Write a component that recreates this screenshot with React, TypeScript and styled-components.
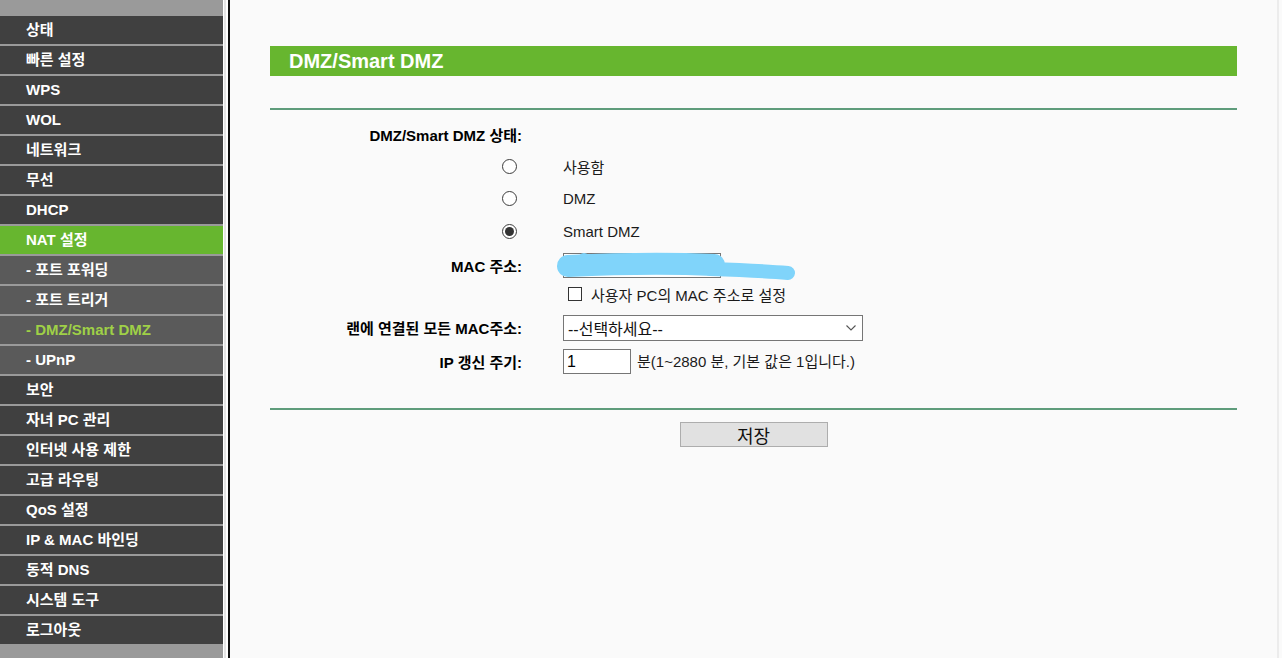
import React from 'react'
import styled, { createGlobalStyle } from 'styled-components'

const GlobalStyle = createGlobalStyle`
    html, body {
        margin: 0;
        padding: 0;
        background: #fafafa;
        font-family: "Liberation Sans", Arial, "Noto Sans CJK KR", sans-serif;
    }
`

type MenuItem = { label: string; sub?: boolean; active?: boolean; current?: boolean }

const menu: MenuItem[] = [
    { label: '상태' },
    { label: '빠른 설정' },
    { label: 'WPS' },
    { label: 'WOL' },
    { label: '네트워크' },
    { label: '무선' },
    { label: 'DHCP' },
    { label: 'NAT 설정', active: true },
    { label: '- 포트 포워딩', sub: true },
    { label: '- 포트 트리거', sub: true },
    { label: '- DMZ/Smart DMZ', sub: true, current: true },
    { label: '- UPnP', sub: true },
    { label: '보안' },
    { label: '자녀 PC 관리' },
    { label: '인터넷 사용 제한' },
    { label: '고급 라우팅' },
    { label: 'QoS 설정' },
    { label: 'IP & MAC 바인딩' },
    { label: '동적 DNS' },
    { label: '시스템 도구' },
    { label: '로그아웃' },
]

export default function App() {
    return (
        <>
            <GlobalStyle />
            <Page>
                <Sidebar>
                    {menu.map((m) => (
                        <MenuRow key={m.label} $sub={m.sub} $active={m.active} $current={m.current}>
                            {m.label}
                        </MenuRow>
                    ))}
                </Sidebar>
                <Divider />
                <Main>
                    <Panel>
                        <TitleBar>DMZ/Smart DMZ</TitleBar>
                        <Rule />
                        <Form>
                            <Row $h={32}>
                                <Label>DMZ/Smart DMZ 상태:</Label>
                                <Value />
                            </Row>
                            <Row $h={32}>
                                <Cell><Radio /></Cell>
                                <Value>사용함</Value>
                            </Row>
                            <Row $h={32}>
                                <Cell><Radio /></Cell>
                                <Value>DMZ</Value>
                            </Row>
                            <Row $h={34}>
                                <Cell><Radio $checked /></Cell>
                                <Value>Smart DMZ</Value>
                            </Row>
                            <Row $h={34}>
                                <Label>MAC 주소:</Label>
                                <Value>
                                    <MacWrap>
                                        <TextBox $w={158} defaultValue="" />
                                        {/* 가림 처리된 MAC 주소 */}
                                        <Scribble width="255" height="40" viewBox="0 0 255 40">
                                            <path d="M18 20 C 60 18, 120 17, 164 19" stroke="#80d4fa" strokeWidth="22" strokeLinecap="round" fill="none" />
                                            <circle cx="34" cy="13" r="6" fill="#80d4fa" />
                                            <path d="M160 23 C 190 24, 215 25, 238 27" stroke="#80d4fa" strokeWidth="14" strokeLinecap="round" fill="none" />
                                        </Scribble>
                                    </MacWrap>
                                </Value>
                            </Row>
                            <Row $h={24}>
                                <Cell />
                                <Value>
                                    <CheckLabel>
                                        <CheckBox />
                                        사용자 PC의 MAC 주소로 설정
                                    </CheckLabel>
                                </Value>
                            </Row>
                            <Row $h={43}>
                                <Label>랜에 연결된 모든 MAC주소:</Label>
                                <Value>
                                    <SelectBox>
                                        <span>--선택하세요--</span>
                                        <svg width="12" height="8" viewBox="0 0 12 8">
                                            <path d="M1.5 1.5 L6 6 L10.5 1.5" stroke="#555" strokeWidth="1.1" fill="none" />
                                        </svg>
                                    </SelectBox>
                                </Value>
                            </Row>
                            <Row $h={22}>
                                <Label>IP 갱신 주기:</Label>
                                <Value>
                                    <TextBox $w={68} defaultValue="1" />
                                    <Hint>분(1~2880 분, 기본 값은 1입니다.)</Hint>
                                </Value>
                            </Row>
                        </Form>
                        <Rule $top={37} />
                        <Actions>
                            <SaveButton>저장</SaveButton>
                        </Actions>
                    </Panel>
                </Main>
            </Page>
        </>
    )
}

const Page = styled.div`
    display: flex;
    height: 658px;
    overflow: hidden;
    background: #fafafa;
`

const Sidebar = styled.nav`
    width: 223px;
    flex-shrink: 0;
    background: #9a9a9a;
    padding-top: 16px;
    display: flex;
    flex-direction: column;
    gap: 2px;
`

const MenuRow = styled.div<{ $sub?: boolean; $active?: boolean; $current?: boolean }>`
    height: 28px;
    line-height: 27px;
    padding-left: 26px;
    font-size: 15px;
    font-weight: bold;
    color: ${(p) => (p.$current ? '#9fd047' : '#ffffff')};
    background: ${(p) => (p.$active ? '#67b62f' : p.$sub ? '#5a5a5a' : '#404040')};
    white-space: nowrap;
`

const Divider = styled.div`
    width: 5px;
    flex-shrink: 0;
    background: linear-gradient(to right, #ffffff 0, #ffffff 1px, #e4e4e4 1px, #e4e4e4 3px, #ffffff 3px);
    border-right: 2px solid #111;
`

const Main = styled.main`
    flex: 1;
    border-right: 2px solid #ececec;
    margin-right: 3px;
    padding: 46px 0 0 40px;
`

const Panel = styled.div`
    width: 967px;
`

const TitleBar = styled.div`
    height: 30px;
    line-height: 30px;
    background: #67b62f;
    color: #fff;
    font-size: 20px;
    font-weight: bold;
    padding-left: 19px;
`

const Rule = styled.div<{ $top?: number }>`
    height: 2px;
    background: #5e9c7b;
    margin-top: ${(p) => p.$top ?? 32}px;
`

const Form = styled.div`
    padding-top: 8px;
    display: flex;
    flex-direction: column;
`

const Row = styled.div<{ $h: number }>`
    display: grid;
    grid-template-columns: 252px 1fr;
    column-gap: 41px;
    height: ${(p) => p.$h}px;
    align-items: center;
`

const Cell = styled.div`
    display: flex;
    justify-content: flex-end;
    padding-right: 5px;
`

const Label = styled.div`
    text-align: right;
    font-size: 15px;
    font-weight: bold;
    color: #000;
    white-space: nowrap;
`

const Value = styled.div`
    display: flex;
    align-items: center;
    font-size: 15px;
    color: #1a1a1a;
    white-space: nowrap;
`

const Radio = styled.span<{ $checked?: boolean }>`
    width: 13px;
    height: 13px;
    border: 1.5px solid #3c3c3c;
    border-radius: 50%;
    background: #fff;
    display: flex;
    align-items: center;
    justify-content: center;
    &::after {
        content: '';
        width: 9px;
        height: 9px;
        border-radius: 50%;
        background: ${(p) => (p.$checked ? '#333' : 'transparent')};
    }
`

const MacWrap = styled.div`
    position: relative;
    display: flex;
`

const Scribble = styled.svg`
    position: absolute;
    left: -13px;
    top: -7px;
    pointer-events: none;
`

const TextBox = styled.input<{ $w: number }>`
    box-sizing: border-box;
    width: ${(p) => p.$w}px;
    height: 25px;
    border: 1px solid #767676;
    background: #fff;
    padding: 0 3px;
    font-size: 16px;
    font-family: "Liberation Sans", Arial, sans-serif;
    color: #000;
    outline: none;
`

const Hint = styled.span`
    margin-left: 6px;
    margin-top: -3px;
`

const CheckLabel = styled.label`
    display: flex;
    align-items: center;
    gap: 9px;
    margin-left: 5px;
`

const CheckBox = styled.span`
    box-sizing: border-box;
    width: 14px;
    height: 14px;
    border: 1px solid #333;
    background: #fff;
`

const SelectBox = styled.div`
    box-sizing: border-box;
    width: 300px;
    height: 26px;
    border: 1px solid #767676;
    background: #fff;
    display: flex;
    align-items: center;
    justify-content: space-between;
    padding: 0 5px 0 4px;
    font-size: 16px;
    color: #111;
`

const Actions = styled.div`
    display: flex;
    justify-content: center;
    padding-top: 12px;
`

const SaveButton = styled.button`
    width: 148px;
    height: 25px;
    background: #e1e1e1;
    border: 1px solid #adadad;
    font-size: 18px;
    font-family: "Noto Sans CJK KR", sans-serif;
    color: #111;
    padding: 0;
    line-height: 22px;
`
